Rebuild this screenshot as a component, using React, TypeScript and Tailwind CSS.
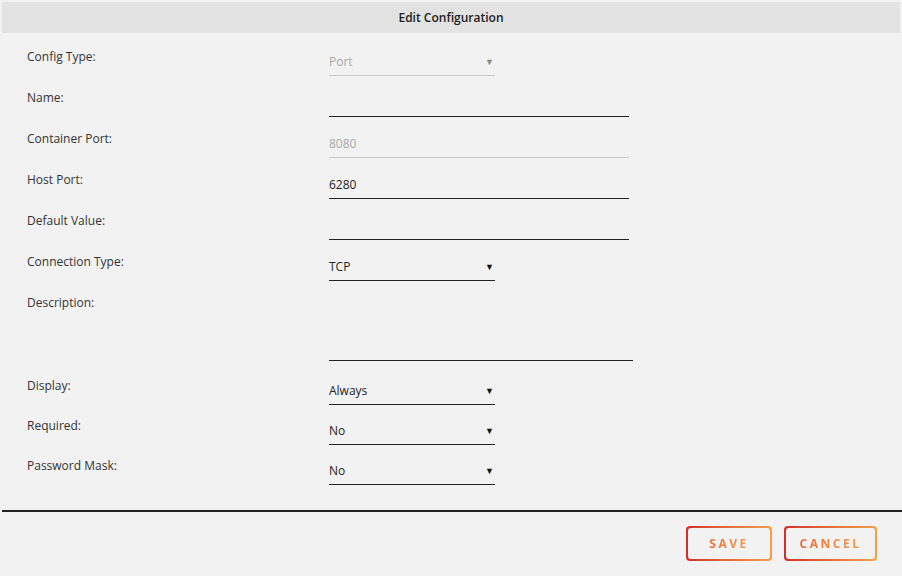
import React from 'react';

type Row =
  | { label: string; kind: 'select'; value: string; disabled?: boolean }
  | { label: string; kind: 'input'; value: string; disabled?: boolean }
  | { label: string; kind: 'textarea' };

const rows: Row[] = [
  { label: 'Config Type:', kind: 'select', value: 'Port', disabled: true },
  { label: 'Name:', kind: 'input', value: '' },
  { label: 'Container Port:', kind: 'input', value: '8080', disabled: true },
  { label: 'Host Port:', kind: 'input', value: '6280' },
  { label: 'Default Value:', kind: 'input', value: '' },
  { label: 'Connection Type:', kind: 'select', value: 'TCP' },
  { label: 'Description:', kind: 'textarea' },
  { label: 'Display:', kind: 'select', value: 'Always' },
  { label: 'Required:', kind: 'select', value: 'No' },
  { label: 'Password Mask:', kind: 'select', value: 'No' },
];

function Field({ row }: { row: Row }) {
  if (row.kind === 'textarea') {
    return <div className="w-[304px] h-[70px] border-b border-[#222]" />;
  }
  const muted = 'disabled' in row && row.disabled;
  const width = row.kind === 'select' ? 'w-[166px]' : 'w-[300px]';
  return (
    <div
      className={`${width} flex items-center justify-between pt-[9px] pb-[5px] leading-4 border-b ${
        muted ? 'border-[#c8c8c8] text-[#a8a8a8]' : 'border-[#222] text-[#222]'
      }`}
    >
      <span>{row.value || '\u00a0'}</span>
      {row.kind === 'select' && (
        <span className={`text-[9px] pr-[1px] ${muted ? 'text-[#888]' : 'text-[#111]'}`}>▼</span>
      )}
    </div>
  );
}

function GradientButton({ label, width }: { label: string; width: string }) {
  return (
    <div className={`${width} h-[35px] rounded-[4px] p-[2px] bg-gradient-to-r from-[#d42b2b] to-[#f2a04a]`}>
      <div className="w-full h-full rounded-[3px] bg-[#f2f2f2] flex items-center justify-center">
        <span className="text-[12px] font-bold tracking-[2.5px] bg-gradient-to-r from-[#ec6a3a] to-[#f39a4a] bg-clip-text text-transparent">
          {label}
        </span>
      </div>
    </div>
  );
}

export default function App() {
  return (
    <div
      className="w-[902px] h-[576px] bg-[#f2f2f2] flex flex-col text-[12px]"
      style={{ fontFamily: '"Open Sans", "Noto Sans", sans-serif' }}
    >
      {/* Header */}
      <div className="mx-[2px] mt-[2px] h-[31px] pt-[1px] bg-[#e3e3e3] flex items-center justify-center">
        <span className="font-semibold text-[#222]">Edit Configuration</span>
      </div>

      {/* Form */}
      <div className="flex flex-col pt-[12px] pl-[27px]">
        {rows.map((row, i) => (
          <div
            key={row.label}
            className={`flex items-start ${row.kind === 'textarea' ? 'h-[83px]' : i >= 7 ? 'h-[40px]' : 'h-[41px]'}`}
          >
            <div className="w-[302px] pt-[4px] leading-4 text-[#333]">{row.label}</div>
            <Field row={row} />
          </div>
        ))}
      </div>

      {/* Footer */}
      <div className="mt-[16px] ml-[2px] border-t-2 border-[#222]" />
      <div className="flex justify-end gap-[12px] pt-[14px] pr-[25px]">
        <GradientButton label="SAVE" width="w-[86px]" />
        <GradientButton label="CANCEL" width="w-[93px]" />
      </div>
    </div>
  );
}
